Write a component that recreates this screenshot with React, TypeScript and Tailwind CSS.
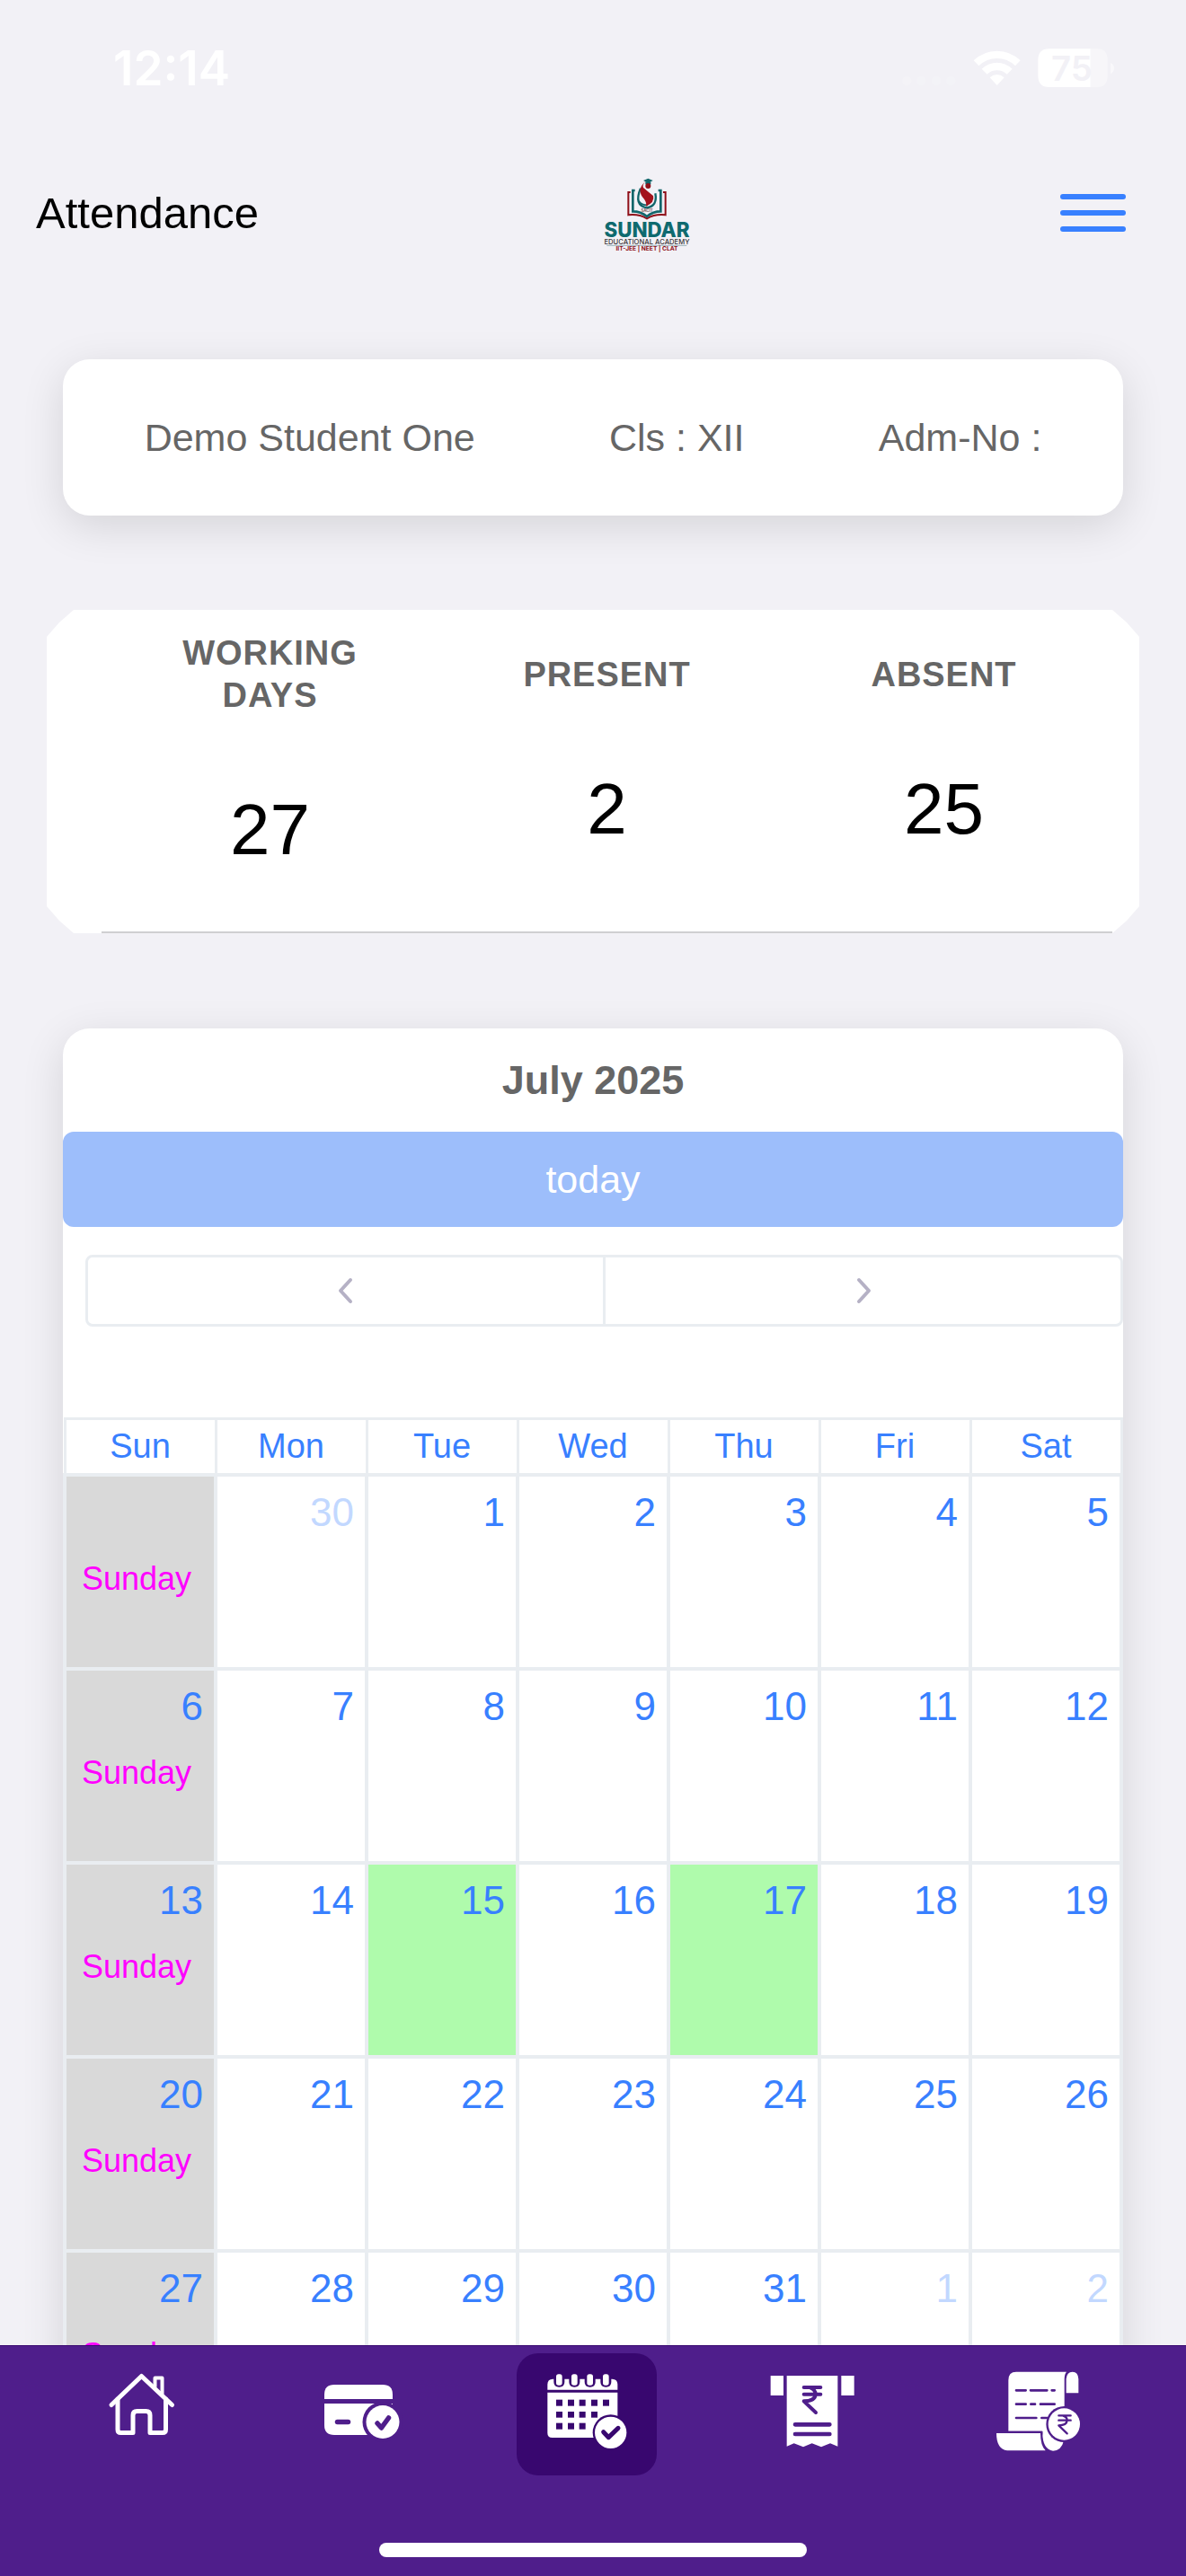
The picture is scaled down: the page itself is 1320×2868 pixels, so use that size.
import type { ReactNode } from "react";

const weekdays = ["Sun", "Mon", "Tue", "Wed", "Thu", "Fri", "Sat"];

type Day = { label: string; outside?: boolean; present?: boolean };

const weeks: Day[][] = [
  [
    { label: "" },
    { label: "30", outside: true },
    { label: "1" },
    { label: "2" },
    { label: "3" },
    { label: "4" },
    { label: "5" },
  ],
  ["6", "7", "8", "9", "10", "11", "12"].map((label) => ({ label })),
  ["13", "14", "15", "16", "17", "18", "19"].map((label) => ({
    label,
    present: label === "15" || label === "17",
  })),
  ["20", "21", "22", "23", "24", "25", "26"].map((label) => ({ label })),
  [
    { label: "27" },
    { label: "28" },
    { label: "29" },
    { label: "30" },
    { label: "31" },
    { label: "1", outside: true },
    { label: "2", outside: true },
  ],
];

const stats = [
  { label: "WORKING DAYS", value: 27 },
  { label: "PRESENT", value: 2 },
  { label: "ABSENT", value: 25 },
];

function StatusBar() {
  return (
    <div className="flex h-[152px] shrink-0 items-center justify-between pr-[70px] pl-[126px] font-[Inter,sans-serif] text-white">
      <span className="text-[53px] leading-none font-semibold">12:14</span>
      <svg className="h-[70px] w-[260px]" viewBox="-6 0 780 210" fill="#fff" aria-hidden="true">
        <g opacity="0.15">
          <circle cx="52" cy="147" r="16" />
          <circle cx="100" cy="147" r="16" />
          <circle cx="150" cy="147" r="16" />
          <circle cx="199" cy="147" r="16" />
        </g>
        <path d="M275 79Q308 47 353 47T431 79L414 97Q388 72 353 72T292 97Z" />
        <path d="M302 107Q325 86 353 86T404 107L386 125Q372 112 353 112T320 125Z" />
        <path d="M329 136Q340 126 353 126T377 136L353 162Z" />
        <path d="M665 40H688Q722 40 722 78V130Q722 168 688 168H665Z" opacity="0.4" />
        <path d="M665 40H527Q490 40 490 78V130Q490 168 527 168H665Z" />
        <path d="M732 87Q744 92 744 105T732 124Z" opacity="0.5" />
        <text x="534" y="147" fontSize="115" fontWeight="600" fill="#f2f1f6">75</text>
      </svg>
    </div>
  );
}

function Logo() {
  return (
    <svg className="h-[110px] w-[160px]" viewBox="45 0 480 330" role="img" aria-label="Sundar Educational Academy">
      <g fill="none" stroke="#8f1019" strokeWidth="6">
        <path d="M188 96H181V172Q216 168 243 184Q270 168 305 172V96H297" />
      </g>
      <g fill="none" stroke="#12666b" strokeWidth="8">
        <path d="M203 90H196V160Q222 160 243 177Q264 160 289 160V90H281" />
        <path d="M222 83Q198 140 243 148Q279 142 271 100" strokeWidth="7" />
        <path d="M216 125Q226 140 246 139" strokeWidth="5" />
      </g>
      <path d="M239 59Q205 88 234 119Q243 132 240 143Q270 130 264 108Q243 91 231 81Q226 72 239 59Z" fill="#a3121c" />
      <path d="M231 57L247 50L263 57L247 65Z" fill="#12666b" />
      <path d="M238 61H256V70H238Z" fill="#12666b" />
      <circle cx="247" cy="75" r="9" fill="#8f1019" />
      <text x="243" y="163" fontSize="13" fontWeight="700" textAnchor="middle" fontFamily="Inter, sans-serif" fill="#7d5a60">SACIT</text>
      <text x="243" y="247" fontSize="67" fontWeight="800" textAnchor="middle" fontFamily="Inter, sans-serif" fill="#0f6a6f">SUNDAR</text>
      <text x="243" y="270" fontSize="23" fontWeight="500" textAnchor="middle" fontFamily="Inter, sans-serif" fill="#3a3538">EDUCATIONAL ACADEMY</text>
      <path d="M109 274H376" stroke="#6d8f97" strokeWidth="2" />
      <text x="243" y="292" fontSize="20" fontWeight="700" textAnchor="middle" fontFamily="Inter, sans-serif" fill="#8f1019">IIT-JEE | NEET | CLAT</text>
    </svg>
  );
}

function Header() {
  return (
    <header className="flex h-[170px] shrink-0 items-center justify-between pr-[67px] pl-10">
      <h1 className="text-[49px] leading-none text-black">Attendance</h1>
      <Logo />
      <button type="button" aria-label="Open menu" className="flex w-[73px] flex-col gap-3">
        <span className="h-[6px] rounded-full bg-[#3880ff]" />
        <span className="h-[6px] rounded-full bg-[#3880ff]" />
        <span className="h-[6px] rounded-full bg-[#3880ff]" />
      </button>
    </header>
  );
}

function StudentCard() {
  return (
    <section className="mx-[70px] flex h-[174px] items-center justify-around rounded-[30px] bg-white px-4 text-[43px] text-[#666] shadow-[0_12px_48px_rgba(0,0,0,0.12)]">
      <span>Demo Student One</span>
      <span>Cls : XII</span>
      <span>Adm-No :</span>
    </section>
  );
}

function StatsCard() {
  return (
    <section className="mx-[52px] mt-[105px] h-[360px] bg-white pr-[30px] pl-[61px] [clip-path:polygon(30px_0,calc(100%-30px)_0,calc(100%-14px)_14px,100%_30px,100%_calc(100%-30px),calc(100%-14px)_calc(100%-14px),calc(100%-30px)_100%,30px_100%,14px_calc(100%-14px),0_calc(100%-30px),0_30px,14px_14px)]">
      <dl className="grid h-full grid-cols-3 items-center border-b-2 border-[#cfcfd1] pb-10 text-center">
        {stats.map((stat) => (
          <div key={stat.label} className="flex flex-col items-center gap-[78px]">
            <dt className="max-w-[240px] text-[38px] leading-[47px] font-bold tracking-wide text-[#666]">{stat.label}</dt>
            <dd className="text-[80px] leading-[96px] text-black">{stat.value}</dd>
          </div>
        ))}
      </dl>
    </section>
  );
}

function Chevron({ d }: { d: string }) {
  return (
    <svg className="mx-auto h-[30px] w-[18px]" viewBox="0 0 18 30" fill="none" stroke="#b5b1c5" strokeWidth="4" strokeLinecap="round" strokeLinejoin="round" aria-hidden="true">
      <path d={d} />
    </svg>
  );
}

function Calendar() {
  return (
    <section className="mx-[70px] mt-[106px] rounded-t-[30px] bg-white shadow-[0_12px_48px_rgba(0,0,0,0.12)]">
      <h2 className="flex h-[115px] items-center justify-center text-[45px] font-bold text-[#666]">July 2025</h2>
      <button type="button" disabled className="block h-[106px] w-full rounded-xl bg-[#9dbefb] text-[43px] text-white">
        today
      </button>
      <div className="mt-[31px] ml-[25px] flex h-[80px] rounded-lg border-[3px] border-[#e9edf1]">
        <button type="button" aria-label="Previous month" className="flex-1 border-r-[3px] border-[#e9edf1]">
          <Chevron d="M14 3L3 15L14 27" />
        </button>
        <button type="button" aria-label="Next month" className="flex-1">
          <Chevron d="M4 3L15 15L4 27" />
        </button>
      </div>
      <table className="mt-[101px] w-full table-fixed border-collapse text-[#3880ff]">
        <thead>
          <tr className="h-[62px]">
            {weekdays.map((day) => (
              <th key={day} scope="col" className="border-[3px] border-[#e9edf1] p-0 text-[38px] leading-[48px] font-normal">
                {day}
              </th>
            ))}
          </tr>
        </thead>
        <tbody>
          {weeks.map((week, row) => (
            <tr key={row} className="h-[216px]">
              {week.map((day, col) => (
                <td
                  key={col}
                  className={`border-4 border-[#e9edf1] p-0 align-top ${
                    col === 0 ? "bg-[#d9d9d9]" : day.present ? "bg-[#affbac]" : ""
                  }`}
                >
                  <div className={`h-16 pt-[14px] pr-3 text-right text-[44px] leading-[52px] ${day.outside ? "opacity-30" : ""}`}>
                    {day.label}
                  </div>
                  {col === 0 && <div className="pt-7 pl-[17px] text-[36px] leading-[44px] text-[#ff00ff]">Sunday</div>}
                </td>
              ))}
            </tr>
          ))}
        </tbody>
      </table>
    </section>
  );
}

const HomeIcon = () => (
  <svg className="h-[90px] w-[100px]" viewBox="-18 0 100 90" fill="none" stroke="#fff" strokeWidth="5" strokeLinecap="round" strokeLinejoin="round">
    <path d="M5 37.500L38.500 5.500L72.500 37.500" />
    <path d="M12 31V65Q12 68.500 15.500 68.500H29V49Q29 44.500 33.500 44.500H43.500Q48 44.500 48 49V68.500H62Q65.500 68.500 65.500 65V31" />
    <path d="M53.500 17V7.500H61.500V25" strokeWidth="4" />
  </svg>
);

const CardIcon = () => (
  <svg className="h-[90px] w-[100px]" viewBox="-4 -10 100 90" fill="#fff">
    <path d="M5 21V16Q5 5 16 5H70Q81 5 81 16V21Z" />
    <path d="M5 26H81V61H16Q5 61 5 50Z" />
    <circle cx="70" cy="46.500" r="22.500" fill="#4f1e8b" />
    <circle cx="70" cy="46.500" r="18.500" />
    <path d="M19.500 46.500H31.500" stroke="#4f1e8b" strokeWidth="5.500" strokeLinecap="round" />
    <path d="M64 48L68.500 53L76.500 42" fill="none" stroke="#4f1e8b" strokeWidth="5.500" strokeLinecap="round" strokeLinejoin="round" />
  </svg>
);

const CalendarIcon = () => (
  <svg className="h-[90px] w-[100px]" viewBox="129 90 300 270" fill="#fff">
    <path d="M148 152V134Q148 116 166 116H364Q382 116 382 134V152Z" />
    <path d="M148 161H382V312H164Q148 312 148 296Z" />
    {[187, 238, 290, 343].map((x) => (
      <g key={x}>
        <path d={`M${x - 18} 108V126Q${x - 18} 143 ${x} 143T${x + 18} 126V108Z`} fill="#38076f" />
        <rect x={x - 10} y="100" width="20" height="37" rx="8" />
      </g>
    ))}
    <g fill="#38076f">
      {[187, 226, 264, 304, 343].map((x) => (
        <rect key={x} x={x - 10} y="185" width="21" height="21" />
      ))}
      {[187, 226, 264, 304].map((x) => (
        <rect key={x} x={x - 10} y="225" width="21" height="20" />
      ))}
      {[187, 226, 264].map((x) => (
        <rect key={x} x={x - 10} y="263" width="21" height="21" />
      ))}
      <circle cx="359" cy="295" r="60" />
    </g>
    <circle cx="359" cy="295" r="53" />
    <path d="M335 293L352 311L384 280" fill="none" stroke="#38076f" strokeWidth="15" strokeLinecap="round" strokeLinejoin="round" />
  </svg>
);

const ReceiptIcon = () => (
  <svg className="h-[90px] w-[100px]" viewBox="103 90 300 270" fill="#fff">
    <path d="M114 105H157V171H114ZM350 105H393V171H350Z" />
    <path d="M168 105H338V341L313 331L283 343L252 331L223 343L192 331L168 341Z" />
    <g fill="none" stroke="#4f1e8b" strokeWidth="12" strokeLinecap="round" strokeLinejoin="round">
      <path d="M225 144H281M225 167H281M247 145Q264 152 264 167Q263 190 225 190L265 228" />
      <path d="M196 268H311M196 300H311" strokeWidth="14" />
    </g>
  </svg>
);

const ScrollIcon = () => (
  <svg className="h-[90px] w-[100px]" viewBox="855 90 300 270" fill="#fff">
    <path d="M907 290V120Q907 92 933 92H1101Q1094 100 1094 116V290Z" />
    <path d="M1100 163V116Q1102 92 1121 92T1141 116V163Z" />
    <path d="M867 297H1014Q1014 338 1031 355H903Q867 350 867 297Z" />
    <path d="M1021 280H1092V322Q1084 356 1056 356Q1021 350 1021 297Z" />
    <circle cx="1093" cy="267" r="60" fill="#4f1e8b" />
    <circle cx="1093" cy="267" r="53" />
    <g fill="none" stroke="#4f1e8b" strokeWidth="8" strokeLinecap="round" strokeLinejoin="round">
      <path d="M933 154H965M981 154H1036M1052 154H1061M933 200H965M982 200H996M1014 200H1061M933 246H1000M1018 246H1036" />
      <path d="M907 293H1018V300" strokeWidth="6" />
      <path d="M1075 238H1115M1075 254H1115M1090 239Q1103 243 1103 254Q1102 271 1075 271L1103 298" strokeWidth="7" />
    </g>
  </svg>
);

const tabs: { label: string; icon: ReactNode; active?: boolean }[] = [
  { label: "Home", icon: <HomeIcon /> },
  { label: "Payments", icon: <CardIcon /> },
  { label: "Attendance", icon: <CalendarIcon />, active: true },
  { label: "Fee receipts", icon: <ReceiptIcon /> },
  { label: "Statements", icon: <ScrollIcon /> },
];

function TabBar() {
  return (
    <nav className="flex h-[257px] shrink-0 flex-col justify-between border-t border-[#38076f] bg-[#4f1e8b] pt-2 pb-[21px]">
      <div className="grid grid-cols-5 pr-10 pl-[26px]">
        {tabs.map((tab) => (
          <a
            key={tab.label}
            href="#"
            aria-label={tab.label}
            className={`mx-auto flex h-[136px] w-[156px] justify-center rounded-3xl pt-5 ${tab.active ? "bg-[#38076f]" : ""}`}
          >
            {tab.icon}
          </a>
        ))}
      </div>
      <div className="mx-auto h-4 w-[36%] rounded-full bg-white" />
    </nav>
  );
}

export default function App() {
  return (
    <div className="flex h-screen flex-col bg-[#f2f1f6] font-['Liberation_Sans',Arial,sans-serif]">
      <StatusBar />
      <Header />
      <main className="min-h-0 flex-1 overflow-y-auto pt-[78px] [scrollbar-width:none]">
        <StudentCard />
        <StatsCard />
        <Calendar />
      </main>
      <TabBar />
    </div>
  );
}
